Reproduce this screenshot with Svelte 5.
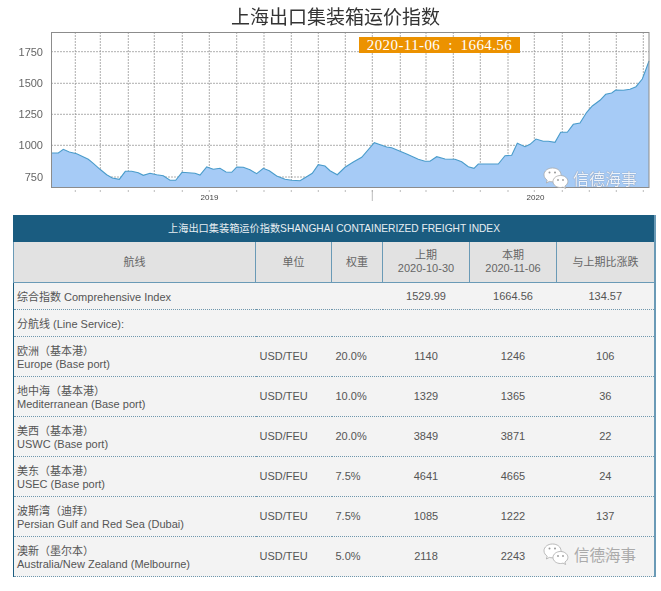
<script>
  const left = [[154,459],[175,459],[190,448],[208,456],[230,461],[265,478],[280,490],[300,508],[320,524],[337,534],[358,538],[376,514],[395,514],[415,518],[430,526],[450,520],[470,524],[490,527],[510,541],[527,541],[546,517],[565,518],[585,520],[600,525],[620,501],[640,508],[660,505],[678,516],[695,517],[710,501],[730,502],[750,509],[770,521],[790,505],[808,512],[830,528],[855,538],[875,541],[900,542],[915,533],[937,520],[955,494],[975,498]];
  const right = [[0,512],[22,524],[45,502],[70,486],[95,472],[133,428],[170,441],[185,443],[230,462],[265,478],[285,484],[300,484],[320,470],[345,477],[375,478],[395,485],[415,500],[432,505],[445,492],[505,492],[525,467],[545,466],[562,430],[585,440],[600,433],[618,417],[640,424],[655,424],[675,427],[692,397],[712,397],[730,373],[750,369],[770,337],[787,318],[810,301],[827,283],[845,279],[857,270],[880,271],[900,268],[918,260],[937,237],[947,210],[957,183]];

  // traced from the 3x crops, back to page pixels
  const pts = [
    ...left.map(([x, y]) => [x / 3, y / 3]),
    ...right.map(([x, y]) => [x / 3 + 330, y / 3])
  ];
  const line = pts.map(([x, y]) => `${x.toFixed(1)},${y.toFixed(1)}`).join(" ");
  const area = `51.5,187.5 ${line} 649,187.5`;

  const gridX = [75.3,100.3,128.3,154.3,182.3,209.3,236.7,264,291.3,318.3,345.3,372.3,400.3,426,453.3,480.3,508,534.3,562.3,589.3,616.3,643.3];
  const gridY = [[51.7,"1750"],[83.3,"1500"],[114.3,"1250"],[145.3,"1000"],[177,"750"]];

  const rows = [
    { zh: "欧洲（基本港）", en: "Europe (Base port)", unit: "USD/TEU", weight: "20.0%", prev: "1140", cur: "1246", diff: "106" },
    { zh: "地中海（基本港）", en: "Mediterranean (Base port)", unit: "USD/TEU", weight: "10.0%", prev: "1329", cur: "1365", diff: "36" },
    { zh: "美西（基本港）", en: "USWC (Base port)", unit: "USD/FEU", weight: "20.0%", prev: "3849", cur: "3871", diff: "22" },
    { zh: "美东（基本港）", en: "USEC (Base port)", unit: "USD/FEU", weight: "7.5%", prev: "4641", cur: "4665", diff: "24" },
    { zh: "波斯湾（迪拜）", en: "Persian Gulf and Red Sea (Dubai)", unit: "USD/TEU", weight: "7.5%", prev: "1085", cur: "1222", diff: "137" },
    { zh: "澳新（墨尔本）", en: "Australia/New Zealand (Melbourne)", unit: "USD/TEU", weight: "5.0%", prev: "2118", cur: "2243", diff: "125" }
  ];
</script>

{#snippet wechat()}
  <svg class="wx" viewBox="0 0 26 22" width="26" height="22">
    <path d="M9.5 1C4.8 1 1 4 1 7.8c0 2.2 1.3 4.1 3.2 5.4L3.4 16l3-1.6c1 .3 2 .4 3.1.4 4.7 0 8.5-3.1 8.5-7S14.2 1 9.5 1z" fill="#fff" stroke="#aaa" stroke-width=".8" />
    <path d="M17.5 8.5c-4.2 0-7.5 2.7-7.5 6s3.3 6 7.5 6c.9 0 1.7-.1 2.5-.4l2.6 1.4-.7-2.4c1.7-1.1 3-2.8 3-4.6 0-3.3-3.3-6-7.4-6z" fill="#fff" stroke="#aaa" stroke-width=".8" />
    <circle cx="6.5" cy="5.5" r="1" fill="#999" />
    <circle cx="12" cy="5.5" r="1" fill="#999" />
    <circle cx="15" cy="13" r=".9" fill="#999" />
    <circle cx="20" cy="13" r=".9" fill="#999" />
  </svg>
{/snippet}

<div class="page">
  <h1>上海出口集装箱运价指数</h1>

  <div class="chart">
    <svg width="661" height="183" viewBox="0 32 661 183">
      {#each gridY as [y, label]}
        <line class="grid" x1="51" x2="649" y1={y} y2={y} />
        <text class="ylabel" x="43" y={y + 4}>{label}</text>
      {/each}
      {#each gridX as x}
        <line class="grid" x1={x} x2={x} y1="32" y2="187" />
        <line class="tick" x1={x} x2={x} y1="190" y2="192" />
      {/each}
      <line class="tick" x1="372.3" x2="372.3" y1="190" y2="201" />

      <polygon points={area} fill="#a6cbf6" />
      <polyline points={line} fill="none" stroke="#4a9ccb" stroke-width="1.1" />
      <line x1="51.5" x2="51.5" y1="153" y2="187" stroke="#1f5c86" stroke-width="1" />
      <rect class="frame" x="51.5" y="32.5" width="597.5" height="155" />

      <text class="xlabel" x="209.5" y="200">2019</text>
      <text class="xlabel" x="535.5" y="200">2020</text>
    </svg>
    <div class="tip">2020-11-06 : 1664.56</div>
    <div class="mark on-chart">{@render wechat()}<span>信德海事</span></div>
  </div>

  <div class="table-wrap">
    <table>
      <colgroup>
        <col style="width:242px" />
        <col style="width:76px" />
        <col style="width:51px" />
        <col style="width:87px" />
        <col style="width:87px" />
        <col />
      </colgroup>
      <thead>
        <tr class="title">
          <th colspan="6">上海出口集装箱运价指数SHANGHAI CONTAINERIZED FREIGHT INDEX</th>
        </tr>
        <tr class="heads">
          <th>航线</th>
          <th>单位</th>
          <th>权重</th>
          <th>上期<br />2020-10-30</th>
          <th>本期<br />2020-11-06</th>
          <th>与上期比涨跌</th>
        </tr>
      </thead>
      <tbody>
        <tr class="short">
          <td class="name">综合指数 Comprehensive Index</td>
          <td></td>
          <td></td>
          <td class="num">1529.99</td>
          <td class="num">1664.56</td>
          <td class="num">134.57</td>
        </tr>
        <tr class="short">
          <td class="name">分航线 (Line Service):</td>
          <td></td><td></td><td></td><td></td><td></td>
        </tr>
        {#each rows as row}
          <tr class="tall">
            <td class="name">{row.zh}<br />{row.en}</td>
            <td class="text">{row.unit}</td>
            <td class="text">{row.weight}</td>
            <td class="num">{row.prev}</td>
            <td class="num">{row.cur}</td>
            <td class="num">{row.diff}</td>
          </tr>
        {/each}
      </tbody>
    </table>
    <div class="mark on-table">{@render wechat()}<span>信德海事</span></div>
  </div>
</div>

<style>
  :global(body) {
    margin: 0;
    background: #fff;
  }

  /* the source is a scaled-up screenshot, everything in it is a bit soft */
  .page {
    width: 661px;
    height: 591px;
    overflow: hidden;
    font-family: "Liberation Sans", "Noto Sans CJK SC", sans-serif;
    filter: blur(0.3px);
  }

  h1 {
    margin: 0;
    height: 32px;
    padding-left: 10px;
    font-family: "Noto Sans CJK SC", sans-serif;
    font-size: 19px;
    font-weight: 400;
    line-height: 31px;
    text-align: center;
    color: #333;
  }

  .chart {
    position: relative;
    height: 183px;
  }

  .chart svg {
    display: block;
  }

  .grid {
    stroke: #999;
    stroke-width: 0.8;
    stroke-dasharray: 2 1;
  }

  .tick {
    stroke: #aaa;
    stroke-width: 0.8;
  }

  .frame {
    fill: none;
    stroke: #8c8c8c;
    stroke-width: 1;
  }

  .ylabel {
    font-size: 11px;
    fill: #666;
    text-anchor: end;
  }

  .xlabel {
    font-size: 8px;
    fill: #444;
    text-anchor: middle;
  }

  .tip {
    position: absolute;
    left: 359px;
    top: 5px;
    width: 161px;
    height: 16px;
    background: #ec9200;
    color: #fff;
    font-family: "Liberation Serif", serif;
    font-size: 15px;
    line-height: 17px;
    text-align: center;
    letter-spacing: 0.4px;
    word-spacing: 3.75px;
    white-space: pre;
  }

  .mark {
    position: absolute;
    display: flex;
    align-items: center;
    font-family: "Noto Sans CJK SC", sans-serif;
    line-height: 20px;
  }

  .wx {
    display: block;
  }

  .on-chart {
    left: 543px;
    top: 135px;
    gap: 4px;
    font-size: 16px;
    color: #eef4fb;
    text-shadow: 0 0 1px #667;
  }

  .on-table {
    left: 530px;
    top: 328px;
    gap: 5px;
    font-size: 15.5px;
    color: #aaa;
  }

  /* the watermark nearly covers the figure underneath it */
  .on-table span {
    background: rgba(243, 243, 243, 0.85);
  }

  .table-wrap {
    position: relative;
    margin: 0 5px 0 13px;
    height: 368px;
    overflow: hidden;
  }

  table {
    width: 643px;
    table-layout: fixed;
    border-collapse: collapse;
    background: #f3f3f3;
    color: #555;
    font-size: 11px;
    line-height: 13px;
    border-left: 1px solid #1a5c80;
    border-right: 2px solid #6a9ab6;
  }

  .title th {
    height: 27px;
    padding: 0;
    background: #1a5c80;
    color: #e8eef2;
    font-size: 10.2px;
    font-weight: 400;
  }

  .heads th {
    height: 40px;
    padding: 0;
    background: #e2e2e2;
    color: #666;
    font-weight: 400;
    font-size: 11px;
    border-left: 1px solid #6a9ab6;
    border-bottom: 1px solid #6a9ab6;
  }

  td {
    padding: 0 4px;
    border-bottom: 1px dotted #6f97ad;
    white-space: nowrap;
  }

  .short td {
    height: 26px;
  }

  .tall td {
    height: 39px;
  }

  .short .name {
    height: 24px;
  }

  .tall .name {
    height: 37px;
  }

  .name {
    padding-left: 3px;
    padding-top: 2px;
  }

  .num {
    text-align: center;
  }

  .text {
    padding-left: 4px;
  }
</style>
